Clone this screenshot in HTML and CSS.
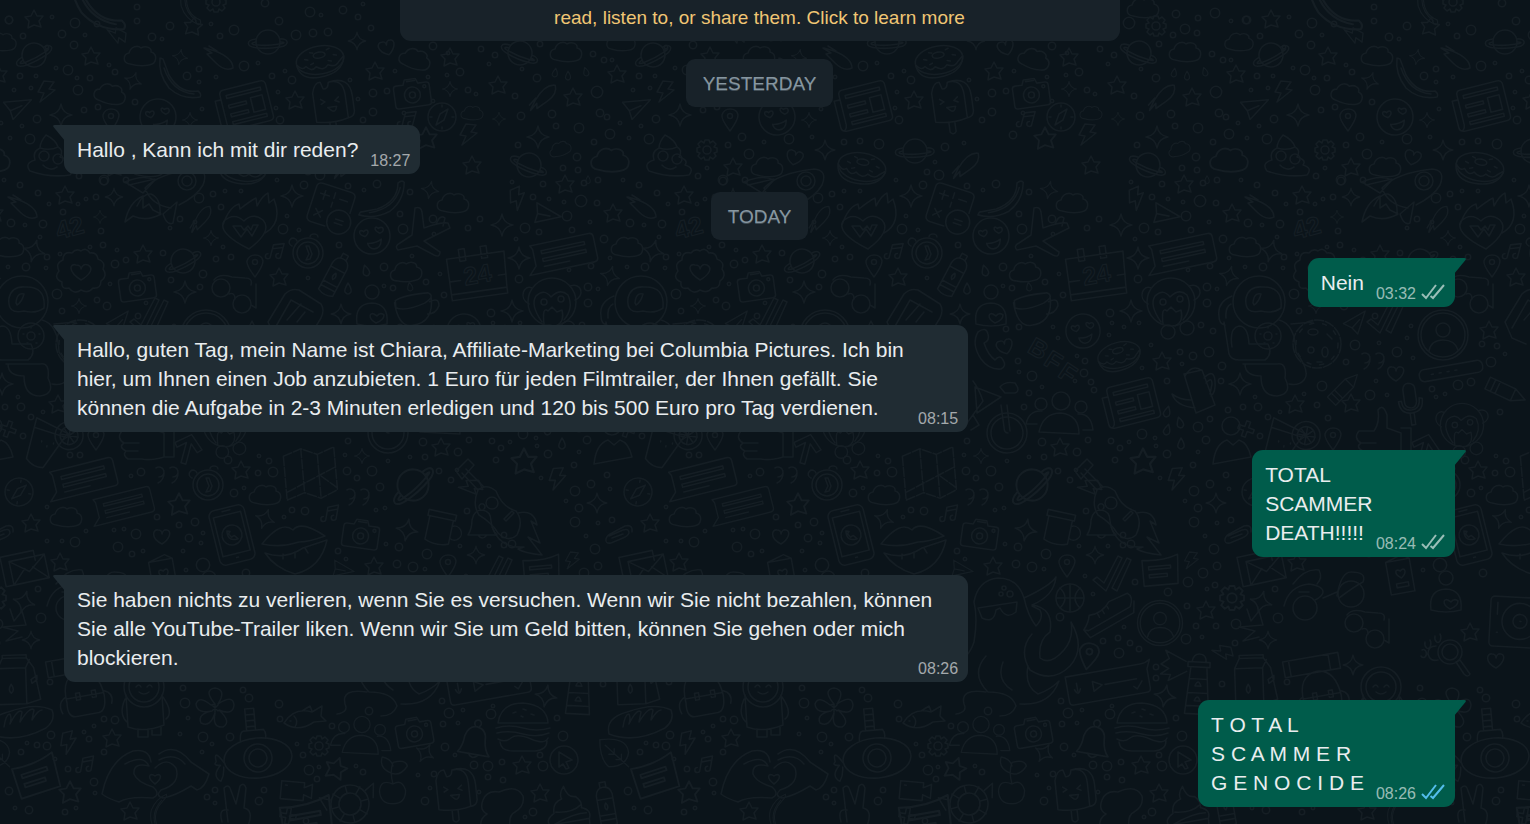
FILE: index.html
```html
<!DOCTYPE html>
<html lang="de">
<head>
  <meta charset="UTF-8" />
  <meta name="viewport" content="width=device-width, initial-scale=1.0" />
  <title>Chat</title>
  <link rel="stylesheet" href="styles.css">
</head>
<body>
  <svg class="wallpaper" aria-hidden="true">
    <defs>
      <path id="star" d="M0-9 L3-3 9-3 5 2 7 8 0 6 -6 9 -5 2 -9-2 -3-3Z" />
      <path id="sparkle" d="M0-11 Q1.500-1.500 11 0 Q1.500 1.500 0 11 Q-1.500 1.500-11 0 Q-1.500-1.500 0-11Z" />
      <path id="cloud" d="M-10 8 C-18 7-17-2-11-3 C-9-10-2-11 1-8 C6-11 12-8 11-4 C18-2 17 8 9 9 Q0 11-10 8Z" />
      <g id="planet"><circle r="12" /><path d="M-12-3 C-22-2-23 5-10 6 Q0 7 12 5 C23 3 20-4 12-3 M-12 0 C-18 1-17 3-10 3 Q0 4 11 2 C18 1 17 0 12 0" /></g>
      <path id="bolt" d="M-2-10 L8-9 3-2 9-1 -6 11 -2 2 -8 1Z" />
      <path id="heart" d="M0 8 C-12 2-9-7-4-6 Q0-6 0-2 Q1-7 5-6 C10-5 8 3 0 8Z" />
      <path id="drop" d="M0-6 Q-4 1-3 3 Q0 7 3 3 Q4 0 0-6Z" />
      <path id="plane" d="M-14-6 L14-6 -6 12 -8 3 4-1 M-8 3 L-14-6" />
      <path id="carrot" d="M-14-8 L-4-5 Q14 2 14 12 Q6 16-3 7 L-12-2 -7-3 -15-8 M-10-10 L-2-5" />
      <g id="pin"><path d="M0 13 Q-9 1-8-3 Q-6-9 0-9 Q7-9 8-3 Q8 2 0 13Z" /><circle cy="-2" r="2.500" /></g>
      <path id="note" d="M-5 7 V-5 L5-9 V4 M-5-1 L5-5 M-5 7 a2.500 2.500 0 1 1-3-2 M5 4 a2.500 2.500 0 1 1-3-2" />
      <g id="gear"><path d="M-2-10 H2 L3-7 6-9 9-6 7-3 10-2 V2 L7 3 9 6 6 9 3 7 2 10 H-2 L-3 7 -6 9 -9 6 -7 3 -10 2 V-2 L-7-3 -9-6 -6-9 -3-7Z" /><circle r="4" /></g>
      <g id="smiley"><circle r="18" /><path d="M-7 0 C-15-3-12-9-8-5 C-4-9-1-4-7 0Z M8-2 C1-6 4-11 7-7 C12-10 14-4 8-2Z M-5 7 Q3 8 9 4 Q8 13 1 13 Q-4 12-5 7Z" /></g>
      <g id="donut"><ellipse rx="24" ry="14" /><path d="M-24 1 Q-23 17-3 17 Q20 17 24 1 M-24 1 Q-19 8-15 4 Q-10 11-5 6 Q2 12 7 6 Q14 10 18 5 L24 0" /><ellipse cy="-5" rx="6" ry="3" /><path d="M-15-3 l3 1 M-9-9 l3 1 M8-9 l3-1 M14-3 l3 1 M-10 3 l3-1 M8 2 l3 1" /></g>
      <g id="paper"><path d="M-19-20 H19 Q24-20 24-15 V17 Q24 21 19 21 H-23 Q-29 21-29 16 V-11 H-24 M-19-20 Q-23-20-23-15 V15 Q-24 20-27 20" /><path d="M-17-14 H18 V-11 H-17Z M-17-4 H1 V-1 H-17Z M-17 5 H1 V8 H-17Z M-17 13 H18 V16 H-17Z M6-6 H18 V9 H6Z" /></g>
      <g id="camera"><path d="M-15-8 H-8 L-6-13 H5 L7-8 H15 Q18-8 18-5 V12 Q18 15 15 15 H-15 Q-18 15-18 12 V-5 Q-18-8-15-8Z M-4-11 H4" /><circle cy="3" r="8" /><circle cy="3" r="3" /><circle cx="13" cy="-4" r="1.500" /></g>
      <g id="compass"><circle r="14" /><path d="M6-8 L2 3 -6 8 -2-3Z M0-12 v2 M0 10 v2 M-12 0 h2 M10 0 h2" /></g>
      <g id="pop"><path d="M-17 18 L-17-11 Q-14-22-8-21 L-6-14 Q-1-13 0-20 Q15-22 15-5 V18 Q0 22-17 18Z M0-20 Q22-24 22-3 V12 Q21 18 15 18 M-4 20 V30 Q-1 34 2 30 V20" /><path d="M-10-4 l4 3 -4 2 M8-4 l-4 3 4 2 M-4 5 H5 Q3 12-1 8Z" /></g>
      <g id="poop"><path d="M-4-21 Q6-16 8-9 Q14-6 10 1 Q20 4 16 9 Q26 12 20 19 Q0 22-20 15 Q-26 7-15 4 Q-18-4-10-8 Q-10-14-4-21Z" /><circle cx="-6" cy="0" r="5" /><circle cx="8" cy="3" r="5" /><path d="M-7 9 Q0 16 7 11 M-10-8 Q0-5 8-9" /></g>
      <path id="banana" d="M-20-22 Q-22-6-11 8 Q2 20 20 17 Q22 14 18 11 Q0 14-11-5 L-17-21Z M-16-12 Q-8 12 14 14" />
      <g id="rocket"><path d="M-28 0 Q-14-15 22-19 Q36-18 30-3 Q24 8 6 17 M-28 0 Q-22 17-2 20 M-44-3 L-18-9 M-36 18 Q-30 5-22 6 Q-12 10-13 27 M-48-6 Q-30-14-18-8 L-30 5Z M4 14 L0 35 Q-6 38-10 26Z M-30 8 Q-44 14-48 34 L-40 28 Q-26 34-12 26 L-20 22 -24 16 -30 20Z" /><circle cx="14" cy="-7" r="9" /><circle cx="14" cy="-7" r="5" /></g>
      <g id="flame"><path d="M-26-4 Q-20-22-10-25 L-9-20 Q1-28 7-31 L8-23 Q14-34 19-36 L20-26 L25-30 Q34-6 16 4 M0 20 Q-32 4-25-8 Q-15-17-5-8 Q4-17 14-9 Q24 2 0 20Z" /><path d="M-16-3 L-8 8 -2 0 3 7 9-4 4-4 2 1 -1-3 -5 1 -8-3Z" /></g>
      <g id="calc"><path d="M-15-20 H15 Q20-20 20-15 V0 M0 20 H-15 Q-20 20-20 15 V-15 Q-20-20-15-20 M-10-14 V-5 M-14-10 H-5 M6-10 H14 M-14 6 L-7 13 M-7 6 L-14 13 M0-15 V-9 M0-5 V0" /><circle cx="12" cy="12" r="12" /><path d="M8 10 H16 M8 14 H16" /></g>
      <g id="watch"><circle r="15" /><circle r="11" /><path d="M-2-7 L1 1 -2 7 2 6 4 1 1-7Z M2-16 a4 3 0 1 1 8 0 M-16-7 a4 4 0 1 1 5-5" /></g>
      <path id="airplane" d="M-3-30 Q3-32 4-26 L6-10 Q22-16 30-15 L32-10 6 3 22 14 Q22 20 16 17 L-1 8 -20 12 Q-24 8-18 5 L-6-3Z M18-14 Q22-24 27-20 L25-12" />
      <g id="calendar"><path d="M-29-20 H29 L27 16 H-29Z M-29 16 V22 H27 V16 M-16-28 h6 v12 h-6Z M6-28 h6 v12 h-6Z M-28 3 H-18 M20 3 H28" /></g>
      <path id="badge" d="M0-20 Q5-24 9-18 Q16-19 17-12 Q25-9 22-2 Q27 5 20 10 Q20 18 12 17 Q7 23 0 19 Q-7 24-12 17 Q-20 19-19 11 Q-28 7-22 0 Q-26-8-18-11 Q-18-20-9-18 Q-5-23 0-20Z M0 9 C-14 0-11-8-5-6 Q0-6 0-2 Q2-8 7-6 C13-3 9 4 0 9Z" />
      <g id="glasses"><circle cx="-16" cy="-2" r="9" /><circle cx="5" cy="14" r="9" /><path d="M-8 4 Q-2 2-2 9 M-23-10 Q-18-17-5-13 L8-12 Q16-12 14-5 M14 15 L19 18 V-6" /></g>
      <path id="bottle" d="M-8-10 Q-7-18 0-18 Q7-18 8-10 V20 Q0 24-8 20Z M-3-18 V-23 H3 V-18 M-8-6 H8 M-8 10 H8 M-8 15 H8 M0-2 Q-3 2 0 5 Q3 2 0-2Z" />
      <path id="cup" d="M-19-9 Q-10-14 14-14 Q22-10 10-4 Q-10 3-19-2Z M-20-7 Q-18 18-4 17 Q18 16 17-10 M15-5 Q25-9 24 0 Q20 8 12 7" />
      <g id="head"><circle cy="-20" r="7" /><path d="M-15 12 Q-18-8 0-9 Q17-8 15 12 Q0 16-15 12Z" /><path d="M4 11 C-5 6-2 0 2 2 L5 4 Q8 0 12 3 Q12 8 4 11Z" /></g>
      <g id="bust"><circle cy="-20" r="9" /><path d="M-18 18 Q-16-2-4-6 L2-1 8-6 Q17-3 20 11Z" /></g>
      <g id="monkey"><circle r="24" /><path d="M-23 2 C-34-4-28-18-20-14 M18-16 C30-20 33-6 23-2 M-10 20 Q-22 3-16-6 Q-8-14-1-5 Q8-14 16-7 Q22 6 12 18 M-8 22 Q-10 4-4 9 L0 5 5 10 10 8 Q13 20 4 24" /><circle cx="-8" cy="0" r="3" /><circle cx="9" cy="-3" r="3" /><circle cx="-3" cy="30" r="7" /><circle cx="16" cy="26" r="7" /></g>
      <g id="astro"><circle r="26" /><path d="M-13-4 Q-10-16 3-15 Q24-16 22 6 Q14 12 2 9 Q-15 13-13-4Z M-6 1 Q-5-10 2-8 Q0 0-5 3Z M-27-6 Q-42 0-40 14 Q-40 22-34 23 M-28 2 Q-34 5-33 16 M-35 20 L-30 52 Q-28 58-20 58 H6 Q14 52 9 42 H-10 Q-11 24-20 24 Q-30 26-27 45 M-14 62 Q-14 74 2 74 Q2 94 18 94 Q34 92 26 76 Q28 60 18 62 H-16 M20 18 Q36 22 37 50 Q52 70 45 78 Q40 84 30 82 M32 22 L54 20" /><circle cx="9" cy="34" r="13" /><circle cx="9" cy="34" r="4" /><path d="M9 25 v1 M17 32 h1 M1 32 h1 M5 41 h1 M14 41 h1" /></g>
      <path id="handset" d="M-11-20 Q-3-26-1-18 Q1-11-5-9 Q-1 3 6 8 Q11 2 14 8 Q18 14 12 17 Q0 18-8 7 Q-18-8-11-20Z" />
      <path id="kettle" d="M-10-18 L8-22 21 13 2 21Z M-9-16 Q-2-28 7-22 M-3 8 Q-14 8-22 2 Q-18 14 1 16 M10-14 Q20-24 21-11 Q22 0 17 4 M12-9 Q18-16 18-8 L16 2" />
      <g id="people"><circle cy="-15" r="9" /><circle cx="-20" cy="-12" r="6" /><circle cx="20" cy="-9" r="6" /><path d="M-22 16 Q-18-3 0-3 Q18-1 18 18Z M-24 8 H-35 Q-32-6-19-5 M22 14 H32 Q30-3 17-2" /></g>
      <g id="bike"><circle r="20" /><circle r="16" /><path d="M1 0 Q-3 0-3-6 L-6-28 M3-2 L0-28 M-32-46 L-6-36 -30-20Z M-34-52 Q-28-44-24-32 L-40-10 M-7-46 Q-2-52 8-50 Q14-42 8-40 H-2Z M-34-18 L-28-8 -36-3" /></g>
      <path id="plus" d="M-2-8 H2 V-2 H8 V2 H2 V8 H-2 V2 H-8 V-2 H-2Z" />
      <g id="guitar"><path d="M-42-32 L-26-15 Q-18-22-8-14 Q-2 2 12 6 Q20 16 13 30 Q4 38-6 28 Q-12 18-25 10 Q-32 0-26-15 M-38-36 L-20-18 M-48-34 L-36-46 -30-40 -42-26Z" /><circle cx="-12" cy="-2" r="6" /><path d="M0 14 L8 6 10 8 2 16Z M14 8 Q30 4 33 20 L27 16 36 38 24 32 38 50 Q20 48 14 44 L20 42 Q-4 44-12 22" /></g>
      <g id="cookie"><circle r="24" stroke-dasharray="9 2" /><circle r="21" stroke-dasharray="4 9" /><circle cx="-6" cy="6" r="3" /><ellipse cx="-4" cy="-12" rx="5" ry="3" /><ellipse cx="8" cy="8" rx="3" ry="5" /><path d="M10-10 l5 5 M0 18 h5" /></g>
      <path id="checks" d="M-20 0 L-16-3 -9 3 5-24 9-22 -7 11Z M-1 8 L14-22 18-20 4 11Z" />
      <g id="avatar"><circle r="25" /><circle r="22" /><circle cy="-5" r="7" /><path d="M-14 16 Q-12 5 0 5 Q12 5 15 15" /></g>
      <path id="quotes" d="M-11-7 a5 5 0 1 1 3 9 M-3-2 Q-3 5-9 8 M3-7 a5 5 0 1 1 3 9 M11-2 Q11 5 5 8" />
      <path id="crayon" d="M-20-6 H8 L21 0 8 7 H-20Z M-14-6 V7 M-9-6 V7 M8-6 V7" />
      <path id="mic" d="M-6-16 Q-5-22 0-22 Q6-21 6-16 V-3 Q5 3 0 3 Q-6 2-6-3Z M-12-5 Q-12 8 0 8 Q12 8 12-5 L9-6 Q9 5 0 5 Q-9 5-9-5Z M-2 8 V20 H2 V8" />
      <g id="bar"><rect x="-32" y="-6" width="64" height="12" rx="5" /><path d="M-20 0 h2 M-12 0 h2 M-4 0 h2 M4 0 h2" /></g>
      <path id="thumb" d="M-20-2 H-5 Q1-10-1-23 Q4-30 8-18 V-5 L22 0 V24 Q8 28 0 26 H-14 Q-20 22-16 18 Q-24 14-18 10 Q-26 5-20-2Z M-18 10 H-3 M-16 18 H-4 M22-5 H32 V24 H22" />
      <g id="drink"><path d="M-15-20 L18-10 0 28 Q-10 30-18 22Z M-15-10 L15-6 M-6 2 v1 M0 6 v1 M6 2 v1" /><circle cx="20" cy="-8" r="14" /><circle cx="20" cy="-8" r="9" /><path d="M20-17 V1 M11-8 H29 M14-14 L26-2 M26-14 L14-2" /></g>
      <path id="arrow" d="M0-18 L14-6 10-2 2-9 V12 H-3 V-9 L-11-2 -14-6Z" />
      <g id="bubble"><path d="M-32-14 H28 Q32-14 32-10 V11 Q32 15 28 15 H-26 L-38 15 -30 7 V-10Z" /><path d="M-22-7 H22 V-4 H-22Z M-22 1 H22 V4 H-22Z M-22 9 H4" /></g>
      <path id="map" d="M-26-20 L-8-26 8-19 25-25 V18 L8 25 -8 18 -26 24Z M-8-26 V18 M8-19 V25 M-25 16 L25-5 M10 3 L25 16" stroke-dasharray="9 2" />
      <g id="phone"><rect x="-18" y="-28" width="36" height="56" rx="6" /><rect x="-14" y="-21" width="28" height="40" /><circle r="10" /><path d="M-4-5 Q-6 6 5 5 L2 1 -1 2 -3-2 -1-4Z M-4-25 h8 M-1 23 h2" /></g>
      <path id="lips" d="M-33-4 Q-14-28-2-18 Q6-28 30-12 Q14-6 4-6 Q-14 0-33-4Z M-30 5 Q-10 12 8 0 L32-8 Q26 20 0 26 Q-20 20-30 5Z M-12 6 v5 M0 4 v6 M10 0 l3 5" />
      <path id="bell" d="M-14 12 Q-10 6-10-3 Q-8-13 0-13 Q9-12 9-2 Q10 7 15 12Z M-4 12 Q0 18 5 12 M-2-14 a3 3 0 1 1 4 0" />
      <path id="mug" d="M-14-14 H14 V-8 H-14Z M-12-8 V16 Q0 21 12 16 V-8 M12-2 a7 7 0 1 1 0 12" />
      <path id="envelope" d="M-20-12 H14 V-2 M-12 18 H-20 V-12 M-12-6 H24 V18 H-12Z M-12-6 L6 8 24-6 M-12 18 L2 4 M24 18 L10 4" />
      <path id="card" d="M-13-15 H11 V18 H-13Z M-13-15 L4-20 11-15 M-6 8 H6 V12 H-6Z M0 3 C-8-3-4-8 0-4 C4-8 8-3 0 3Z" />
      <g id="ball"><circle r="14" /><path d="M-14 0 H14 M0-14 V14 M-10-10 Q0 0-10 10 M10-10 Q0 0 10 10" /></g>
      <path id="shoe" d="M-28 0 Q-20-4-16-10 Q-4-5 8-12 L28-10 Q32-4 24 3 H-24Z M-28 0 L-26 10 H24 L30 0 M-8-7 v4 M-2-8 v4 M4-10 v4" />
      <g id="octopus"><path d="M-30 22 Q-26-2-30-18 Q-26-40-6-42 Q14-42 20-22 Q24-4 32 6 Q40-2 36-10 L28-14 M-30 22 Q-36 40-50 42 M20-22 Q46-34 52-43 Q50-24 28-15 Q50-12 46 12 Q34 20 36 38 Q46 46 60 30 Q70 18 67 2 Q82 28 66 46 Q48 64 26 50 Q14 30 28 14 M-18 36 Q-34 54-16 72 Q8 72 12 86 Q8 96-4 96 M24 46 Q20 66 34 74 Q46 70 55 61 Q46 86 16 84 M-18 72 Q-44 68-40 84 Q-36 92-48 94 M-1 42 Q-8 60 8 70" /><path d="M-26-12 L13-18 12-8 Q2 0-4-12 L-8-10 Q-10 4-22-2Z" /><circle cx="0" cy="-32" r="2" /><circle cx="6" cy="-26" r="3" /><circle cx="-3" cy="-26" r="2" /></g>
      <g id="voice"><path d="M-40-14 H36 Q42-14 46-17 L42-8 V11 Q42 15 38 15 H-36 Q-40 15-40 11Z M-14-5 L-5 0 -14 5Z M-2 0 H30 M-30-6 v8 M-33 0 Q-30 8-27 0 M26 7 l3 3 6-7" /></g>
      <g id="burger"><path d="M-25-4 Q-22-24 0-24 Q24-22 25-4Z M-27 1 Q-14-3 0 1 T27 1 M-26 6 Q-14 3 0 7 T26 6 M-25 12 Q-18 16-12 11 T8 12 T25 11 M-23 15 Q-22 24-10 24 H12 Q24 23 24 14" /><path d="M-10-14 l3-1 M0-18 l3 1 M8-13 l3 1 M-2-11 l2 1" /></g>
      <path id="tower" d="M-7-22 Q-6-30 0-30 Q7-30 7-22 M-11-22 H11 V-17 H-11Z M-8-17 L-12 30 H12 L8-17 M-9-5 H9 M-10 9 H10 M-11 22 H11 M-3 2 Q0-6 3 2Z M-3 17 Q0 9 3 17Z M-13-22 L-34-32 -30-24 -38-18 -30-14 -38-8 -28-8 -30-2 -12-12" />
      <path id="milk" d="M-20-12 L-15-22 H9 L16-12 22 20 8 24 H-20Z M-20-12 H8 V24 M8-12 L12-20 M-15-22 V-25 H9 V-22 M-7 4 Q-11 10-7 13 Q-3 10-7 4Z M13 0 L19-4 V0 L14 4Z" />
      <path id="pack" d="M-18 10 Q-20-18 0-19 Q18-18 20 8 Q20 24 12 25 H-12 Q-20 24-18 10Z M-18 6 H20 M-8 2 v7 h4 v-7Z M8 2 v7 h4 v-7Z M-18 4 Q-28 8-24 20 M20 4 Q30 8 26 18 M-32-34 H24 V-18 H-32Z M-26-34 V-18 M14-34 V-18" />
      <g id="baby"><circle r="20" /><circle r="15" /><path d="M-8 0 q3-4 5 0 M3 0 q3-4 5 0 M-5 5 Q0 9 5 5 M-18 8 L-16 40 Q0 46 20 38 L18 8 M-19 12 Q-26 28-16 36 M19 10 Q30 26 22 32 M-6 42 v8 h10 v-8 M8 42 v6 h9 v-8" /></g>
      <path id="flower" d="M0-4 Q-12-18 0-20 Q12-18 3-4 Q18-14 19-3 Q18 8 4 2 Q17 14 8 19 Q-3 20 0 5 Q-5 20-14 15 Q-18 6-3 3 Q-18 6-19-4 Q-16-13-4-3Z M-3-3 L3 3 M3-3 L-3 3 M0-4 V4" />
      <path id="fish" d="M-20 4 Q-10-12 8-7 L18-13 17-3 22 2 10 3 Q-6 14-20 4Z M-10-3 Q-5 2-9 8 M-2-8 L6-13 8-8 M-14 2 h1" />
      <g id="sub"><ellipse rx="34" ry="20" /><circle r="14" /><circle r="9" /><path d="M-16-18 Q-16-28-12-28 H8 Q11-24 9-19 M-9-29 V-50 H0 V-29 M-9-44 H0 M-9-38 H0 M-9-32 H0 M-34 2 Q-44-14-42 0 Q-46 4-38 4 Q-48 14-39 20 Q-35 14-35 6" /></g>
      <path id="hands" d="M-53 18 Q-46-16-22-25 Q-6-28-4-14 M-30-12 Q-12-22-6-10 Q-22-14-21-2 Q-18 6-2 11 Q6 18-2 22 Q-26 20-36 26 Q-48 22-53 18 M4-22 Q20-34 36-14 L54-2 Q50 12 42 14 L36 10 Q20 20 8 22 Q0 20 6 14 Q26 8 21-8 Q12-20 0-8 M4-16 Q20-24 30-12 M0 8 C-9 1-5-4 0 0 C5-4 9 1 0 8Z" />
      <path id="bread" d="M-32 12 Q-36-4-14-10 Q14-20 30-12 Q34-2 24 6 Q-6 22-32 12Z M-18 5 Q-16-8-12-8 Q-10-4-12 2 Q-4-14 0-10 L-2 0 Q8-16 12-12 L10-2 Q16-12 20-12" />
      <g id="page"><path d="M-16-13 Q4-10 20-16 L18 13 H-16Z M-10-6 H12 V-3 H-10Z M-10 2 H8 V5 H-10Z" /></g>
      <path id="video" d="M-15-8 H8 V-3 L16-7 V7 L8 4 V10 H-15Z M-11-4 h2" />
      <g id="buoy"><circle r="19" /><circle r="11" /><path d="M-19 0 h8 M11 0 h8 M0-19 v8 M0 11 v8 M-14-14 l6 6 M14-14 l-6 6 M-14 14 l6-6 M14 14 l-6-6 M-18-9 L-28-14 -24 0 M18-9 L28-14 24 0" /></g>
      <path id="cherry" d="M0 10 Q-14 4-15 18 Q-14 32 0 32 Q14 32 14 17 Q10 4 0 10 Q-4-4 0-14 Q14-18 16-10 Q8 2-2-2 Q-16-8-12-20 Q-2-18 0-10" />
      <path id="peace" d="M-8 16 L-12-18 Q-8-22-6-18 L0-2 4-20 Q8-24 10-18 L8 2 Q18 4 12 20 M-8 4 Q-18 2-14 16" />
      <path id="leaf" d="M-18-18 Q12-22 14-4 Q12 12-8 12 Q-18 4-18-18Z M-12-12 L14 12 M-8-2 L-2-2 V-8 M0 4 H6 V-2" />
      <g id="cursor"><circle r="14" /><path d="M-5-8 L8 0 2 2 5 8 2 9 -1 4 -5 7Z" /></g>
      <path id="ice" d="M0-26 Q2-14 10-14 Q16-8 14-2 Q24 2 20 10 H-20 Q-24 4-14-1 Q-14-12-4-14 Q-6-20 0-26Z M-18 10 L-16 30 H18 L20 10 M-12-2 Q4 2 14-5 M-16 10 Q6 2 18 4" />
      <path id="splat" d="M-20-8 Q-16-18-4-16 Q14-24 20-12 Q22-2 12 4 Q4 8 8 24 M-20-8 Q-24 2-16 6 Q-26 12-20 26" />
      <path id="clip" d="M-10 2 L4-4 Q10-6 10-1 Q9 2 4 4 L-8 9 Q-14 10-13 5 Q-12 1-7-1 L6-8 Q14-10 13-2 M-7 4 L4 0" />
      <g id="scooter"><circle cx="-4" cy="16" r="12" /><circle cx="42" cy="2" r="13" /><path d="M-25 14 Q-20-6 0-8 Q14-6 14 0 Q14 4 6 8 M28 4 Q32-20 42-20 Q58-20 54-10 Q46-6 30 6 M14 6 L28 0 M-16-8 Q-4-24 10-22 Q14-14 8-8 M-10 0 h10" /></g>
      <g id="magnifier"><circle r="12" /><circle r="8" /><path d="M6 10 L10 8 20 22 Q18 26 14 22Z M-14-6 Q-22-6-22 2 Q-20 10-12 8 M-20-12 a3 5 0 1 1-5 2 M-28-2 a3 4 0 1 1-1 6 M-10-18 a3 5 0 1 1-5 2" /></g>
      <g id="record"><rect x="-22" y="-24" width="54" height="50" rx="4" /><circle cx="8" cy="0" r="18" /><circle cx="8" cy="0" r="7" /><path d="M8 0 h1 M-15-18 v12 M-15 12 h1" /></g>
      <path id="device" d="M-27 12 L-10-16 Q-4-22 4-20 L26-6 Q30 0 26 8 L10 34 M-20 18 L-4-10 18 2 M-27 12 L-20 28 -6 34 M-8 10 L6-6 M2 12 L10 2" />
      <path id="scribble" d="M-4-16 L0-4 8-14 12 0 -12 2 M-12 2 L4 6 -8 16 8 12" />
      <g id="tile"></g>
    </defs>
    <use href="#tile" />
    <use href="#tile" x="-619" />
    <use href="#tile" x="619" />
    <use href="#tile" x="1237" />
    <use href="#tile" x="1856" />
  </svg>

  <main class="chat">
    <button class="notice" type="button">read, listen to, or share them. Click to learn more</button>

    <div class="day">YESTERDAY</div>

    <div class="msg in">
      <svg class="tail" viewBox="0 0 12 16"><path d="M1.500 0H12V16L.5 2Q-.5 0 1.500 0Z" /></svg>
      Hallo , Kann ich mit dir reden?
      <span class="meta"><time>18:27</time></span>
    </div>

    <div class="day">TODAY</div>

    <div class="msg out">
      <svg class="tail" viewBox="0 0 12 16"><path d="M10.500 0H0V16L11.500 2Q12.500 0 10.500 0Z" /></svg>
      Nein
      <span class="meta"><time>03:32</time><svg class="ticks" viewBox="0 0 24 16"><path d="M1 10L5 14 15 1M9.500 12L12 14 23 1" /></svg></span>
    </div>

    <div class="msg in">
      <svg class="tail" viewBox="0 0 12 16"><path d="M1.500 0H12V16L.5 2Q-.5 0 1.500 0Z" /></svg>
      Hallo, guten Tag, mein Name ist Chiara, Affiliate-Marketing bei Columbia Pictures. Ich bin hier, um Ihnen einen Job anzubieten. 1 Euro für jeden Filmtrailer, der Ihnen gefällt. Sie können die Aufgabe in 2-3 Minuten erledigen und 120 bis 500 Euro pro Tag verdienen.
      <span class="meta"><time>08:15</time></span>
    </div>

    <div class="msg out">
      <svg class="tail" viewBox="0 0 12 16"><path d="M10.500 0H0V16L11.500 2Q12.500 0 10.500 0Z" /></svg>
      TOTAL<br>SCAMMER<br>DEATH!!!!!
      <span class="meta"><time>08:24</time><svg class="ticks" viewBox="0 0 24 16"><path d="M1 10L5 14 15 1M9.500 12L12 14 23 1" /></svg></span>
    </div>

    <div class="msg in">
      <svg class="tail" viewBox="0 0 12 16"><path d="M1.500 0H12V16L.5 2Q-.5 0 1.500 0Z" /></svg>
      Sie haben nichts zu verlieren, wenn Sie es versuchen. Wenn wir Sie nicht bezahlen, können Sie alle YouTube-Trailer liken. Wenn wir Sie um Geld bitten, können Sie gehen oder mich blockieren.
      <span class="meta"><time>08:26</time></span>
    </div>

    <div class="msg out">
      <svg class="tail" viewBox="0 0 12 16"><path d="M10.500 0H0V16L11.500 2Q12.500 0 10.500 0Z" /></svg>
      T O T A L<br>S C A M M E R<br>G E N O C I D E
      <span class="meta"><time>08:26</time><svg class="ticks read" viewBox="0 0 24 16"><path d="M1 10L5 14 15 1M9.500 12L12 14 23 1" /></svg></span>
    </div>
  </main>

  <script src="wallpaper.js"></script>
</body>
</html>
```

FILE: styles.css
```css
html, body {
  margin: 0;
  height: 100%;
}
body {
  background-color: #0b141a;
  color: #e9edef;
  font-family: "Liberation Sans", Arial, sans-serif;
  overflow: hidden;
}
.wallpaper {
  position: absolute;
  top: 0;
  left: 0;
  width: 100%;
  height: 100%;
  fill: none;
  stroke: #151e24;
  stroke-width: 1.6;
  stroke-linecap: round;
  stroke-linejoin: round;
}
.wallpaper text {
  font-size: 25px;
  font-weight: bold;
  text-anchor: middle;
  stroke-width: 1.2;
}
.chat {
  position: relative;
  display: flex;
  flex-direction: column;
  align-items: center;
  gap: 18px;
  padding: 0 75px 18px 64px;
}
.notice {
  width: 100%;
  max-width: 720px;
  padding: 3px 18px 8px;
  border: none;
  border-radius: 0 0 11px 11px;
  background-color: #182229;
  color: #f0c674;
  font-family: inherit;
  font-size: 19px;
  line-height: 30px;
  cursor: pointer;
}
.day {
  padding: 11px 17px 9px;
  border-radius: 9px;
  background-color: #182229;
  color: #8696a0;
  font-size: 19px;
  line-height: 28px;
  text-shadow: 0 1px 0 rgba(134, 150, 160, 0.4);
}
.msg {
  position: relative;
  max-width: 65%;
  box-sizing: border-box;
  padding: 10px 26px 3px 13px;
  border-radius: 11px;
  font-size: 21px;
  line-height: 29px;
}
.in {
  align-self: flex-start;
  background-color: #202c33;
  border-top-left-radius: 0;
}
.out {
  align-self: flex-end;
  background-color: #005c4b;
  border-top-right-radius: 0;
}
.tail {
  position: absolute;
  top: 0;
  width: 12px;
  height: 16px;
}
.in .tail {
  left: -11px;
  fill: #202c33;
}
.out .tail {
  right: -11px;
  fill: #005c4b;
}
/* the time hangs into the right padding */
.meta {
  float: right;
  display: flex;
  gap: 5px;
  margin: 16px -16px 0 12px;
  color: rgba(255, 255, 255, 0.6);
  font-size: 16px;
  line-height: 20px;
}
.ticks {
  width: 24px;
  height: 16px;
  fill: none;
  stroke: currentColor;
  stroke-width: 2;
}
.read {
  color: #53bdeb;
}
```

FILE: wallpaper.js
```javascript
// name, x, y, rotation, scale
const doodles = `
star 34 19;star 193 26 10;star 91 56;star 295 100;star 375 71;star 450 57;star 498 85;star 472 165;star 65 195;star 143 254
star 617 74;star 573 97;star 565 184;star 114 167;star 613 213;star 279 277;star 543 361;star 441 447;star 524 461 0 1.4;star 252 330
star 114 403;star 58 404;star 241 470;star 179 504 0 1.2;star 31 523;star 60 562;star 374 566;star 587 610;star 233 632;star 112 738
star 336 768 20 1.2;star 70 792 0 1.2;star 130 811;star 522 765;star 540 793;star 426 138 0 1.2
sparkle 180 57 10 .7;sparkle 133 81 20 .8;sparkle 61 115;sparkle 190 120 0 .7;sparkle 357 41 0 .8;sparkle 450 89 0 .7;sparkle 499 119 0 .6
sparkle 538 137;sparkle 206 150 0 .9;sparkle 292 196;sparkle 211 238 0 .7;sparkle 34 251 15;sparkle 519 258;sparkle 114 197 0 .8;sparkle 430 190 10 .8
sparkle 502 225;sparkle 185 292;sparkle 341 314 0 .9;sparkle 79 306 0 .7;sparkle 610 276 15 .9;sparkle 512 311;sparkle 621 384;sparkle 362 456 0 .7
sparkle 265 519 20 .9;sparkle 407 530 10;sparkle 597 503 0 .9;sparkle 476 555 0 .8;sparkle 24 602 15;sparkle 31 640 0 .8;sparkle 116 665 0 .9
sparkle 546 696 10;sparkle 425 753 30 .9;sparkle 100 217 0 .6
cloud 140 56;cloud 110 94 10;cloud 2 42 0 .9;cloud 415 59 15;cloud 472 113 0 .7;cloud 566 52;cloud 560 149 -20 .7;cloud 610 160 0 1.2;cloud 148 167
cloud 8 247;cloud 453 203;cloud 406 272 -5;cloud 265 495;cloud 66 517;cloud 524 8
planet 34 55 -25;planet 268 42;planet 520 53 25;planet 529 165 25;planet 296 151;planet 183 261 -25
bolt 117 35 90 .9;bolt 46 91;bolt 468 134;bolt 517 198 -30;bolt 471 487 60;bolt 557 478 -10;bolt 572 560 0 .8;bolt 604 652 70 .9;bolt 68 742 -20
carrot 219 56;carrot 541 97 -80;carrot 345 165 -80;carrot 23 205;carrot 199 219 -90 .9
banana 180 80;banana 384 199 -80;banana 98 3 5 1.4;banana 192 5 30 .8
gear 216 2;gear 537 26;gear 88 150;gear 613 598 0 1.2;gear 319 746
donut 320 60 -10;donut 243 167 10;donut 500 355 -15 .9
paper 246 105 -14;paper 514 402 -14
smiley 158 117 -5;smiley 372 236 -5;smiley 464 331 -5 .95
pop 331 102 -8;pop 454 790 -6
camera 412 92 -8;camera 137 285 -8;camera 361 533 8;camera 414 731 -10
compass 442 117;compass 19 492 10;note 409 119 15;note 277 251 15;note 332 513 10;note 87 764 10
plane 18 107 -5;plane 546 215 30;plane 120 322 -30 .9;plane 342 570 30 .8
pin 111 118;pin 255 264;pin 96 437;pin 448 564;pin 470 654 10 1.2
heart 387 47 -15;heart 176 157 15;heart 159 373;heart 386 346 -15;heart 162 536;heart 259 660
drop 555 73 10 .8;drop 568 76 0 .8;drop 586 72 -15 .8;drop 366 271 -15;drop 348 289;drop 410 287 -10 .8;drop 548 412 15;drop 561 423 -15;drop 548 430 15;drop 562 444;drop 588 180 0 .7
poop 50 156;rocket 173 188;flame 249 229;calc 331 207 18;watch 308 253;airplane 418 238;calendar 478 275 -8
badge 81 271;glasses 237 290;bottle 335 275 28;cup 415 308 -5;head 372 312;device 295 310;bubble 564 253 -12
monkey 552 302;astro 22 302;handset 370 352;kettle 575 392;people 442 416;bike 388 433;plus 627 429 20;bust 612 446
planet 413 485 -40 1.3;guitar 504 505;cookie 80 344;checks 150 322;avatar 206 335;quotes 136 361;crayon 107 388 -45 .9;mic 174 405 -8
bar 214 371 -10;crayon 269 391 25;thumb 142 433;monkey 225 425 0 .9;drink 48 440 10;arrow 187 452 15
bubble 84 478 -14;bubble 124 505 -14 .9;quotes 167 475;watch 208 485;map 311 474 -5;phone 232 535 -14;quotes 358 497
lips 295 548;mug 440 526 12;bell 482 523;envelope 22 565 -12;card 164 575 -10;clip 619 534
head 209 598;scooter 72 592;glasses 133 625;magnifier 213 652;record 275 621 3;checks 494 580;page 540 572 -5
ball 451 598;shoe 489 616 -30;avatar 541 623 0 .9;octopus 385 620;voice 488 684 -10;tower 579 684 3
milk 18 680 -2;pack 83 690 -10;baby 144 687;flower 215 708;fish 304 719;sub 258 758 -5;people 362 738 0 .9;bell 475 741 10 1.1
burger 523 727;bread 22 722;page 35 778 -18 1.2;hands 155 776;video 296 790 5;buoy 350 804 -15;cherry 393 775 0 .9;peace 236 806
leaf 616 756 0 .9;cursor 564 760;ice 568 812 -10;splat 503 808;plus 288 816 10;scribble 14 625
bottle 606 805 -10;banana 160 814 60 .7;page 305 822 -10 1.4`;

// x, y, radius
const dots = `
9 20 4;23 36 3;47 47 2;62 34 4;75 23 5;97 24 3;52 17 2;85 35 2;74 45 4;137 7 3;137 21 3;152 37 4;170 26 4;162 39 2;211 24 2;220 36 3;234 30 5
265 3 4;279 21 4;296 35 5;313 33 4;328 32 4;310 12 5;321 15 2;343 10 4;358 17 3;371 28 3;363 4 2;244 66 5;258 63 2;272 76 3;292 80 4;285 71 2
216 77 2;199 69 3;199 82 2;187 76 4;115 72 3;109 65 2;90 78 3;77 78 2;68 70 5;56 68 2;20 76 3;36 76 2;14 90 2;31 88 2;78 90 5;84 110 3;98 107 3;135 102 3
373 93 4;387 91 3;358 99 2;350 80 2;373 112 4;363 120 3;280 120 4;276 108 2;278 92 2;202 109 2;395 71 2;404 113 2;433 46 4;448 53 2;481 49 3;489 64 2
495 55 3;468 90 3;460 72 4;476 94 2;447 75 2;428 77 2;433 101 2;37 119 4;1 123 2;22 126 2;10 138 2;30 139 5
510 23 6;557 14 4;579 18 3;596 13 5;566 29 5;578 33 3;612 21 2;628 20 4;554 35 3;612 60 2
4 180 2;20 185 3;38 193 3;49 204 2;63 212 3;78 204 2;86 199 2;104 180 5;126 180 3;96 197 3;11 223 4;25 225 2;43 224 4;40 237 2;101 231 3;90 247 2
103 245 3;117 250 2;47 257 3;26 267 4;8 267 2;46 268 2;60 254 2;115 264 4;126 260 3;163 253 3;203 274 4;216 259 3;231 257 3;223 247 2;180 219 3;170 228 2
195 222 2;199 198 5;213 194 3;225 191 2;241 191 2;221 207 3;304 185 4;287 216 2;283 229 5;299 230 2;348 186 3;377 184 4;364 190 2;400 214 3;433 219 4
403 229 5;434 234 2;480 219 3;468 228 3;412 256 2;384 267 4;426 282 3;440 274 2;393 288 3;384 286 2;444 295 3;410 192 3;339 245 3;308 278 2;110 284 2
97 300 3;107 306 4;62 311 3;57 294 5;171 280 3;200 287 3;146 303 2;138 316 3;540 44 3;593 54 3;604 60 3;522 69 2;537 78 4;515 96 3;521 116 4;552 114 4
579 128 5;556 126 3;597 92 6;600 113 4;607 117 3;594 142 3;610 134 5;518 145 3;577 157 4;578 170 3;563 168 3;512 182 2;543 184 3;584 183 3;598 180 3
533 197 3;549 199 2;564 202 2;581 201 6;597 203 3;525 228 5;539 232 3;567 216 5;572 230 3;590 222 2;516 239 2;604 239 4;610 258 2
109 145 3;104 181 4;88 168 2;79 176 3;123 137 4;130 154 5;145 142 2;170 139 5;193 137 2;225 142 3;241 141 3;260 144 5;326 147 4;308 172 3;320 175 5
277 180 2;316 162 2;394 135 4;345 143 2;519 279 4;569 270 2;591 266 3;588 287 4;598 289 2;588 303 4;582 325 3;594 331 3;491 313 4;493 323 2;505 327 2
490 335 2;520 323 2;532 345 2;561 352 3;574 356 4;590 352 5;563 364 2;523 368 2;603 366 4;602 381 3;548 381 3;387 329 3;400 327 3;434 327 2;439 338 2
399 361 3;400 372 2;413 376 5;423 387 2;458 356 2;466 361 3;465 373 4;456 381 2;472 382 3;475 390 3;410 393 3;405 407 3;348 441 3;423 442 4;469 440 3
492 441 3;510 442 2;501 448 3;523 434 5;536 438 2;537 446 2;548 454 4;579 427 5;587 440 4;591 419 3;609 410 3;624 407 3;21 407 4;31 417 3;43 412 2
410 457 2;425 457 3;458 452 4;388 461 2;347 471 4;357 478 3;372 471 5;439 471 3;457 470 2;451 480 3;496 460 3;541 478 2;574 465 3;579 452 2;607 475 3
118 345 5;109 362 3;142 343 2;160 352 5;176 358 2;170 338 2;174 326 2;85 386 5;139 381 2;133 395 5;150 395 2;195 389 3;208 394 2;199 397 2;221 385 5
234 382 4;254 362 5;245 344 3;260 346 3;268 354 2;263 412 3;80 405 3;91 418 3;23 436 3;67 394 2;18 397 2;70 455 3;80 455 3;131 476 2;141 472 4
228 460 4;259 456 2;269 461 3;273 472 5;258 473 3;234 493 4;244 488 2;292 510 3;305 511 4;284 517 2;345 455 2;380 487 4;376 510 2;385 508 2;47 507 2
47 541 2;62 541 2;75 542 5;86 531 2;114 530 2;124 529 2;136 534 5;118 547 5;157 517 3;179 525 3;195 522 4;189 538 4;203 533 2;201 543 2;183 551 2;203 565 7
132 554 3;143 551 2;38 589 3;41 618 5;186 570 2;246 573 4;338 551 3;346 559 2;399 547 4;386 544 2;397 564 4;413 567 5;425 569 2;427 554 5;460 546 2
489 546 2;504 545 3;512 544 4;504 535 3;467 511 3;575 491 5;566 501 2;579 508 4;575 522 5;591 484 4;610 489 2;598 523 2;612 520 3;586 536 2;595 549 5
598 566 4;584 573 5;569 582 5;588 589 2;596 585 3;516 582 3;549 592 4;474 594 2;466 576 2;568 606 3;441 617 4;567 639 5;577 626 3;583 637 2;597 626 3
617 624 5;616 643 3;505 627 2;484 641 3;499 638 3;511 643 3;500 653 5;520 649 3;537 667 3;537 678 3;603 684 3;442 701 3;449 713 5;463 710 2;443 724 3
458 723 2;445 747 4;455 755 2;493 706 2;491 714 5;557 718 3;563 736 5;474 765 4;488 766 5;502 762 3;540 755 3;543 766 5;488 777 3;503 780 3;479 792 2
533 812 4;425 801 4;418 775 2;434 774 3;430 788 2;525 817 2;369 711 4;356 766 2;363 772 3;50 682 3;183 688 3;185 703 5;188 718 2;243 690 3;249 698 4
279 704 4;280 719 3;332 726 3;297 744 2;303 755 3;309 770 5;319 767 2;317 779 3;203 737 5;212 744 2;230 737 4;202 752 2;180 734 2;94 726 2;104 719 3
115 720 4;84 732 2;89 739 3;51 735 4;104 752 3;27 743 2;37 745 3;47 746 4;21 752 3;55 759 2;68 769 3;94 782 4;95 793 2;9 791 4;15 808 2;29 810 4
65 812 3;76 808 2;215 790 3;207 797 3;215 803 2;259 801 4;264 790 3;306 821 3`;

const letters = [["42", 72, 236, -15], ["24", 479, 283, -10], ["B", 415, 356, 30], ["F", 430, 368, 32], ["F", 444, 380, 34]];

const rows = (text) => text.trim().split(/[;\n]/).map((row) => row.split(" "));

document.getElementById("tile").innerHTML =
  rows(doodles).map(([name, x, y, r = 0, s = 1]) =>
    `<use href="#${name}" transform="translate(${x} ${y}) rotate(${r}) scale(${s})" />`).join("") +
  rows(dots).map(([x, y, r]) => `<circle cx="${x}" cy="${y}" r="${r - 0.3}" />`).join("") +
  letters.map(([t, x, y, r]) => `<text transform="translate(${x} ${y}) rotate(${r})">${t}</text>`).join("");
```
